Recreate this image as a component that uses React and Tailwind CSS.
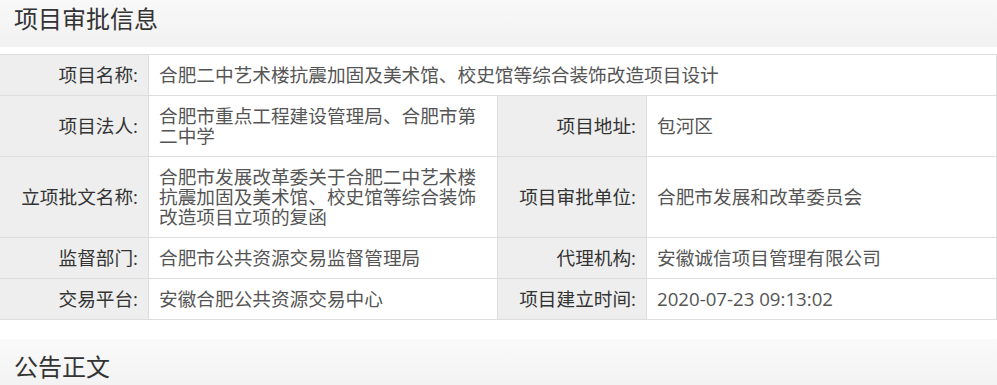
import React from 'react';

const rows = [
  { label: '项目名称:', value: '合肥二中艺术楼抗震加固及美术馆、校史馆等综合装饰改造项目设计', full: true },
  { label: '项目法人:', value: '合肥市重点工程建设管理局、合肥市第二中学', label2: '项目地址:', value2: '包河区' },
  {
    label: '立项批文名称:',
    value: '合肥市发展改革委关于合肥二中艺术楼抗震加固及美术馆、校史馆等综合装饰改造项目立项的复函',
    label2: '项目审批单位:',
    value2: '合肥市发展和改革委员会',
  },
  { label: '监督部门:', value: '合肥市公共资源交易监督管理局', label2: '代理机构:', value2: '安徽诚信项目管理有限公司' },
  { label: '交易平台:', value: '安徽合肥公共资源交易中心', label2: '项目建立时间:', value2: '2020-07-23 09:13:02' },
];

const Header = ({ title }) => (
  <div className="h-[56px] flex items-center px-[14px] bg-gradient-to-b from-[#fafafa] to-[#f1f1f1]">
    <h2 className="text-[24px] leading-none text-[#333]">{title}</h2>
  </div>
);

const Label = ({ children }) => (
  <div className="bg-[#eeeeee] border-r border-b border-[#dddddd] flex items-center justify-end px-[10px] py-[10px] text-[#333] text-right">
    {children}
  </div>
);

const Value = ({ children, span }) => (
  <div
    className={
      'border-r border-b border-[#dddddd] flex items-center px-[10px] py-[10px] text-[#555] ' +
      (span ? 'col-span-3' : '')
    }
  >
    <span>{children}</span>
  </div>
);

export default function App() {
  return (
    <div
      className="w-[997px] bg-white -mt-[9px]"
      style={{ fontFamily: '"Open Sans", "Noto Sans CJK SC", sans-serif' }}
    >
      <Header title="项目审批信息" />

      <div className="mt-[7px] border-t border-[#dddddd] grid grid-cols-[149px_349px_149px_350px] text-[18.67px] leading-[20px]">
        {rows.map((r, i) =>
          r.full ? (
            <React.Fragment key={i}>
              <Label>{r.label}</Label>
              <Value span>{r.value}</Value>
            </React.Fragment>
          ) : (
            <React.Fragment key={i}>
              <Label>{r.label}</Label>
              <Value>{r.value}</Value>
              <Label>{r.label2}</Label>
              <Value>{r.value2}</Value>
            </React.Fragment>
          )
        )}
      </div>

      <div className="mt-[19px]">
        <Header title="公告正文" />
      </div>
    </div>
  );
}
